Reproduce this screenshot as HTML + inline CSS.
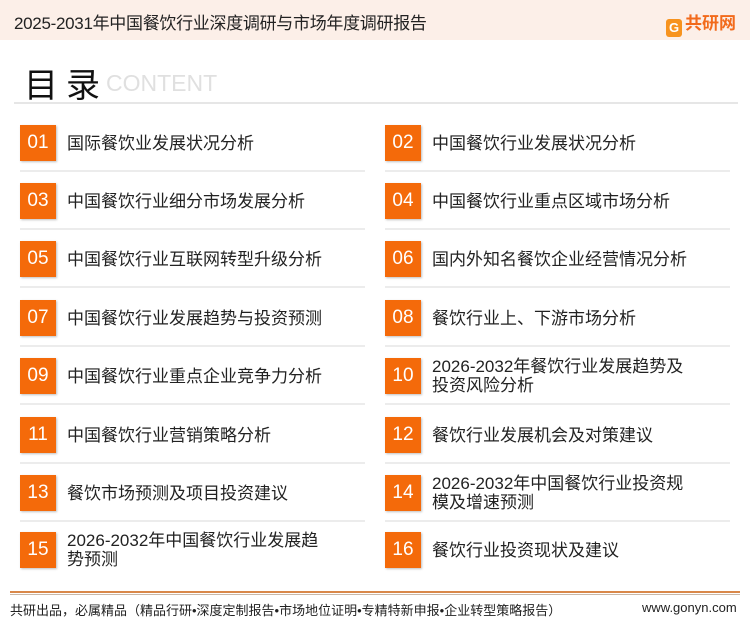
<!DOCTYPE html><html><head><meta charset="utf-8"><style>
*{margin:0;padding:0;box-sizing:border-box}
body{width:750px;height:622px;background:#fff;position:relative;overflow:hidden;font-family:"Liberation Sans","Noto Sans CJK SC",sans-serif;color:#222}
.hd{position:absolute;left:0;top:0;width:750px;height:40px;background:#fcefe8}
.hd .t{position:absolute;left:14px;top:9px;font-size:17px;letter-spacing:-0.3px;color:#222}
.logo{position:absolute;left:666px;top:9px;font-size:17px;font-weight:bold;color:#f26a1b}
.logo span{display:inline-block;width:16px;height:18px;background:#f7931e;border-radius:3px;vertical-align:-3px;margin-right:3px;color:#fff;font-size:13px;text-align:center;line-height:18px}
.ml{position:absolute;left:24px;top:58px;font-size:34px;color:#111;letter-spacing:8px}
.ct{position:absolute;left:106px;top:70px;font-size:23px;color:#e0e0e0}
.hr{position:absolute;left:14px;top:102px;width:724px;height:2px;background:#e6e6e6}
.it{position:absolute;width:345px;height:58px}
.it .b{position:absolute;left:0;top:0;width:36px;height:36px;background:#f46a0a;color:#fff;font-size:19px;text-align:center;line-height:36px;box-shadow:1px 1px 2px rgba(0,0,0,.25)}
.it .x{position:absolute;left:47px;top:0;height:36px;display:flex;align-items:center;font-size:17px;line-height:19px;color:#222}
.it .l{position:absolute;left:0;top:45px;width:345px;height:2px;background:#ececec}
.fl{position:absolute;left:10px;width:730px}
.ft{position:absolute;top:600px;font-size:13px;color:#222}
</style></head><body>
<div class="hd"><div class="t">2025-2031年中国餐饮行业深度调研与市场年度调研报告</div><div class="logo"><span>G</span>共研网</div></div>
<div class="ml">目录</div><div class="ct">CONTENT</div>
<div class="hr"></div>

<div class="it" style="left:20px;top:125px"><div class="b">01</div><div class="x">国际餐饮业发展状况分析</div><div class="l"></div></div>
<div class="it" style="left:385px;top:125px"><div class="b">02</div><div class="x">中国餐饮行业发展状况分析</div><div class="l"></div></div>
<div class="it" style="left:20px;top:183px"><div class="b">03</div><div class="x">中国餐饮行业细分市场发展分析</div><div class="l"></div></div>
<div class="it" style="left:385px;top:183px"><div class="b">04</div><div class="x">中国餐饮行业重点区域市场分析</div><div class="l"></div></div>
<div class="it" style="left:20px;top:241px"><div class="b">05</div><div class="x">中国餐饮行业互联网转型升级分析</div><div class="l"></div></div>
<div class="it" style="left:385px;top:241px"><div class="b">06</div><div class="x">国内外知名餐饮企业经营情况分析</div><div class="l"></div></div>
<div class="it" style="left:20px;top:300px"><div class="b">07</div><div class="x">中国餐饮行业发展趋势与投资预测</div><div class="l"></div></div>
<div class="it" style="left:385px;top:300px"><div class="b">08</div><div class="x">餐饮行业上、下游市场分析</div><div class="l"></div></div>
<div class="it" style="left:20px;top:358px"><div class="b">09</div><div class="x">中国餐饮行业重点企业竞争力分析</div><div class="l"></div></div>
<div class="it" style="left:385px;top:358px"><div class="b">10</div><div class="x">2026-2032年餐饮行业发展趋势及<br>投资风险分析</div><div class="l"></div></div>
<div class="it" style="left:20px;top:417px"><div class="b">11</div><div class="x">中国餐饮行业营销策略分析</div><div class="l"></div></div>
<div class="it" style="left:385px;top:417px"><div class="b">12</div><div class="x">餐饮行业发展机会及对策建议</div><div class="l"></div></div>
<div class="it" style="left:20px;top:475px"><div class="b">13</div><div class="x">餐饮市场预测及项目投资建议</div><div class="l"></div></div>
<div class="it" style="left:385px;top:475px"><div class="b">14</div><div class="x">2026-2032年中国餐饮行业投资规<br>模及增速预测</div><div class="l"></div></div>
<div class="it" style="left:20px;top:532px"><div class="b">15</div><div class="x">2026-2032年中国餐饮行业发展趋<br>势预测</div></div>
<div class="it" style="left:385px;top:532px"><div class="b">16</div><div class="x">餐饮行业投资现状及建议</div></div>

<div class="fl" style="top:591px;height:2px;background:#d9884a"></div>
<div class="fl" style="top:594px;height:1px;background:#c9b8a8"></div>
<div class="ft" style="left:10px">共研出品，必属精品（精品行研•深度定制报告•市场地位证明•专精特新申报•企业转型策略报告）</div>
<div class="ft" style="left:642px">www.gonyn.com</div>
</body></html>
